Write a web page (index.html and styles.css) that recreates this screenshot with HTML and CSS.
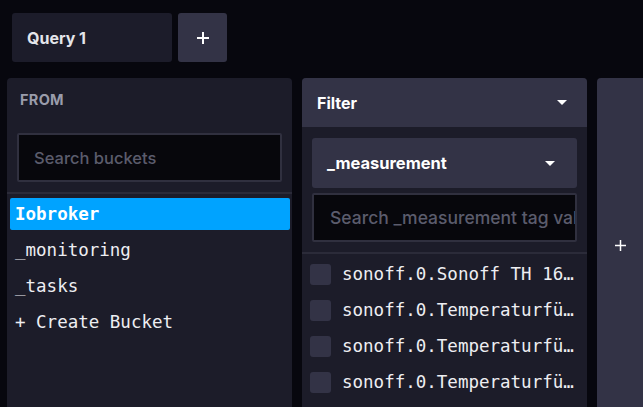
FILE: index.html
```html
<!DOCTYPE html>
<html>
<head>
<meta charset="utf-8">
<link rel="stylesheet" href="styles.css">
</head>
<body>
<div class="tabs">
  <div class="tab">Query 1</div>
  <div class="tab-add"><svg width="12" height="12" viewBox="0 0 12 12"><path d="M6 0v12M0 6h12" stroke="#fff" stroke-width="2"/></svg></div>
</div>
<div class="builder">
  <div class="card">
    <div class="from-head">FROM</div>
    <div class="search-wrap">
      <div class="input"><span class="ph">Search buckets</span></div>
    </div>
    <div class="divider"></div>
    <div class="buckets">
      <div class="bucket selected">Iobroker</div>
      <div class="bucket">_monitoring</div>
      <div class="bucket">_tasks</div>
      <div class="bucket">+ Create Bucket</div>
    </div>
  </div>
  <div class="card">
    <div class="filter-head">
      <span>Filter</span>
      <span class="caret"></span>
    </div>
    <div class="filter-body">
      <div class="dropdown">
        <span>_measurement</span>
        <span class="caret"></span>
      </div>
      <div class="input input-tag"><span class="ph">Search _measurement tag values</span></div>
    </div>
    <div class="divider"></div>
    <div class="tags">
      <div class="tag"><span class="check"></span><span class="tag-text">sonoff.0.Sonoff TH 16 Temperatur</span></div>
      <div class="tag"><span class="check"></span><span class="tag-text">sonoff.0.Temperaturfühler</span></div>
      <div class="tag"><span class="check"></span><span class="tag-text">sonoff.0.Temperaturfühler 2</span></div>
      <div class="tag"><span class="check"></span><span class="tag-text">sonoff.0.Temperaturfühler 3</span></div>
      <div class="tag"><span class="check"></span><span class="tag-text">sonoff.0.Temperaturfühler 4</span></div>
    </div>
  </div>
  <div class="card-add"><svg width="11" height="11" viewBox="0 0 11 11"><path d="M5.5 0v11M0 5.5h11" stroke="#fff" stroke-width="1.5"/></svg></div>
</div>
</body>
</html>
```
FILE: styles.css
```css
html, body {
  margin: 0;
  padding: 0;
  height: 100%;
  overflow: hidden;
}
body {
  background: #07070e;
  font-family: Inter, "Open Sans", sans-serif;
  color: #e9e9ee;
}
.tabs {
  display: flex;
  gap: 6px;
  padding: 13px 0 0 12px;
}
.tab {
  width: 160px;
  height: 49px;
  box-sizing: border-box;
  padding-left: 15px;
  display: flex;
  align-items: center;
  background: #1c1c2a;
  border-radius: 3px;
  font-size: 16px;
  font-weight: 700;
  color: #e4e5ea;
}
.tab-add {
  width: 49px;
  height: 49px;
  display: flex;
  align-items: center;
  justify-content: center;
  background: #333346;
  border-radius: 3px;
}
.builder {
  display: flex;
  gap: 10px;
  margin-top: 16px;
  padding-left: 7px;
}
.card {
  width: 285px;
  height: 334px;
  flex: none;
  background: #1c1c29;
  border-radius: 4px;
  overflow: hidden;
}
.from-head {
  height: 42px;
  padding: 0 13px;
  display: flex;
  align-items: center;
  font-size: 14.5px;
  font-weight: 700;
  color: #9a9cab;
  letter-spacing: 0.3px;
}
.search-wrap {
  padding: 13px 10px 10px;
}
.input {
  height: 49px;
  box-sizing: border-box;
  border: 2px solid #30303f;
  border-radius: 2px;
  background: #07070c;
  display: flex;
  align-items: center;
  padding-left: 15px;
  overflow: hidden;
  white-space: nowrap;
}
.ph {
  font-size: 16.5px;
  font-weight: 500;
  color: #5b5c6c;
}
.divider {
  height: 2px;
  background: #2b2b39;
}
.buckets {
  display: flex;
  flex-direction: column;
  gap: 4px;
  padding: 4px 2px 0 3px;
}
.bucket {
  height: 32px;
  display: flex;
  align-items: center;
  padding-left: 5px;
  border-radius: 2px;
  font-family: "DejaVu Sans Mono", "Liberation Mono", monospace;
  font-size: 17.5px;
  color: #eeeef2;
}
.bucket.selected {
  background: #00a3ff;
  color: #ffffff;
  font-weight: 700;
}
.filter-head {
  height: 49px;
  background: #333346;
  display: flex;
  align-items: center;
  justify-content: space-between;
  padding: 0 20px 0 15px;
  font-size: 16px;
  font-weight: 700;
  color: #ffffff;
}
.caret {
  width: 0;
  height: 0;
  border-left: 5px solid transparent;
  border-right: 5px solid transparent;
  border-top: 5px solid #ffffff;
}
.filter-body {
  padding: 11px 10px 10px;
  display: flex;
  flex-direction: column;
  gap: 5px;
}
.dropdown {
  height: 50px;
  background: #333346;
  border-radius: 3px;
  display: flex;
  align-items: center;
  justify-content: space-between;
  padding: 0 22px 0 15px;
  font-size: 16.5px;
  font-weight: 700;
  color: #ffffff;
}
.input-tag {
  padding-left: 16px;
}
.input-tag .ph {
  font-size: 17.5px;
}
.tags {
  padding: 2px 10px 0 8px;
  display: flex;
  flex-direction: column;
}
.tag {
  height: 36px;
  display: flex;
  align-items: center;
  gap: 11px;
}
.check {
  width: 21px;
  height: 21px;
  flex: none;
  background: #333346;
  border-radius: 3px;
}
.tag-text {
  font-family: "DejaVu Sans Mono", "Liberation Mono", monospace;
  font-size: 17.5px;
  color: #eeeef2;
  white-space: nowrap;
  overflow: hidden;
  text-overflow: ellipsis;
  min-width: 0;
}
.card-add {
  width: 46px;
  height: 334px;
  flex: none;
  background: #333346;
  border-radius: 4px 0 0 4px;
  display: flex;
  align-items: center;
  justify-content: center;
}
```
